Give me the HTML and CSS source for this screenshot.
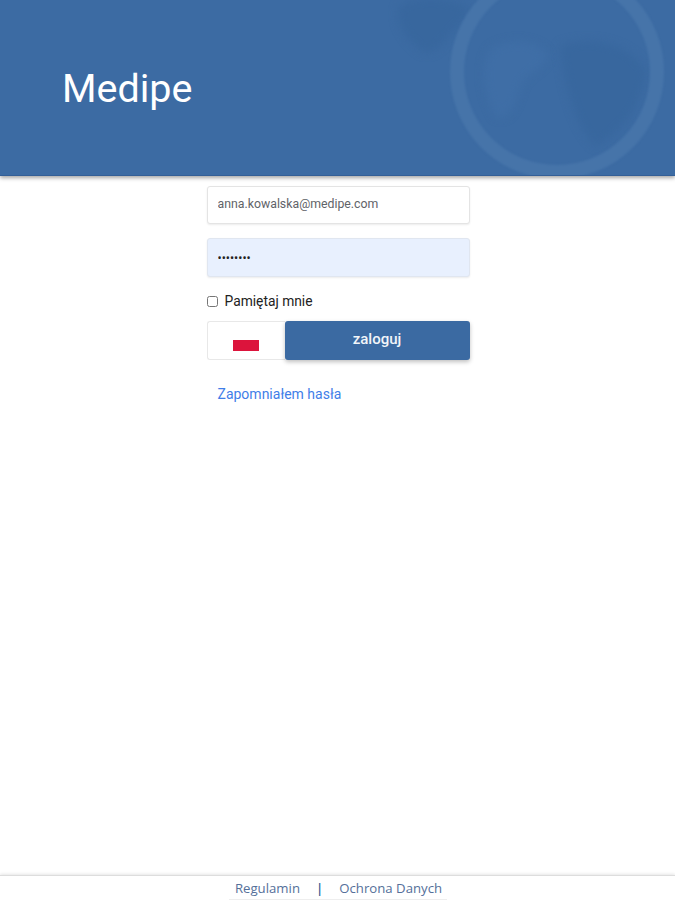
FILE: index.html
```html
<!DOCTYPE html>
<html lang="pl">
<head>
    <meta charset="UTF-8">
    <meta name="viewport" content="width=device-width, initial-scale=1.0">
    <title>Medipe</title>
    <link rel="stylesheet" href="styles.css">
</head>
<body>
<div class="page">
    <header class="top-bar">
        <svg class="globe" width="335" height="176" viewBox="340 0 335 176" aria-hidden="true">
            <path class="land land-dark" d="M398 8 C410 -6 455 -4 468 8 C466 24 452 30 446 40 C436 50 428 56 420 50 C408 40 396 26 398 8 Z"/>
            <path class="land land-light" d="M490 50 C510 36 540 40 548 56 C540 72 526 72 520 88 C516 106 506 122 496 116 C486 100 478 70 490 50 Z"/>
            <path class="land land-dark" d="M560 46 C590 34 630 44 646 70 C644 100 626 130 596 146 C578 130 566 96 560 46 Z"/>
            <circle class="ring" cx="557" cy="72" r="100"/>
        </svg>
        <h1 class="brand">Medipe</h1>
    </header>

    <main class="login">
        <form class="login-form">
            <input class="field" type="text" value="anna.kowalska@medipe.com">
            <input class="field field-filled" type="password" value="********">
            <label class="remember">
                <input type="checkbox"><span>Pamiętaj mnie</span>
            </label>
            <div class="actions">
                <div class="lang">
                    <span class="flag"></span>
                </div>
                <button class="submit" type="button">zaloguj</button>
            </div>
            <a class="forgot" href="#">Zapomniałem hasła</a>
        </form>
    </main>

    <footer class="bottom-bar">
        <div class="bottom-links">
            <a href="#">Regulamin</a>
            <span class="sep">|</span>
            <a href="#">Ochrona Danych</a>
        </div>
    </footer>
</div>
</body>
</html>
```

FILE: styles.css
```css
html, body {
    margin: 0;
    padding: 0;
}
body {
    font-family: Roboto, "Liberation Sans", sans-serif;
    background-color: #fff;
    overflow: hidden;
}
.page {
    display: flex;
    flex-direction: column;
    height: 900px;
}
.top-bar {
    position: relative;
    height: 176px;
    flex-shrink: 0;
    display: flex;
    align-items: center;
    padding-left: 62px;
    box-sizing: border-box;
    background-color: #3c6ba3;
    border-bottom: 1px solid #335f97;
    box-shadow: 0 2px 4px rgba(0,0,0,0.35);
    overflow: hidden;
}
.globe {
    position: absolute;
    right: 0;
    top: 0;
}
.ring {
    fill: none;
    stroke: #4674a9;
    stroke-width: 14;
    filter: blur(1px);
}
.land {
    filter: blur(4px);
}
.land-dark {
    fill: #38679e;
}
.land-light {
    fill: #3f6ea6;
}
.brand {
    position: relative;
    margin: 3px 0 0 0;
    font-size: 39.5px;
    font-weight: 400;
    color: #fff;
    line-height: 1;
}
.login {
    flex: 1;
    display: flex;
    justify-content: center;
    padding-top: 10px;
}
.login-form {
    width: 263px;
    margin-left: 1px;
    display: flex;
    flex-direction: column;
}
.field {
    display: block;
    box-sizing: border-box;
    width: 100%;
    height: 38px;
    margin-bottom: 14px;
    padding: 0 10px 3px;
    font-family: inherit;
    font-size: 12.3px;
    color: #5f6368;
    background-color: #fff;
    border: 1px solid #e4e4e4;
    border-radius: 3px;
    box-shadow: 0 1px 2px rgba(0,0,0,0.08);
    outline: none;
}
.field-filled {
    height: 39px;
    padding-bottom: 0;
    color: #222;
    background-color: #e8f0fe;
    border-color: #e0e6f0;
}
.remember {
    display: flex;
    align-items: center;
    gap: 7px;
    height: 18px;
    margin-top: 1px;
    font-size: 13.8px;
    color: #222;
}
.remember input {
    width: 11px;
    height: 11px;
    margin: 0;
}
.actions {
    display: flex;
    height: 39px;
    margin-top: 11px;
}
.lang {
    box-sizing: border-box;
    width: 78px;
    padding: 18px 0 0 25px;
    background-color: #fff;
    border: 1px solid #e8e8e8;
    border-right: none;
    border-radius: 3px 0 0 3px;
}
.flag {
    display: block;
    width: 26px;
    height: 11px;
    background-color: #dc143c;
}
.submit {
    flex: 1;
    padding: 0 0 3px;
    font-family: inherit;
    font-size: 15px;
    font-weight: 500;
    color: #f2f5f9;
    background-color: #3b6aa2;
    border: none;
    border-radius: 3px;
    box-shadow: 0 2px 4px rgba(0,0,0,0.25);
}
.forgot {
    margin: 26px 0 0 11px;
    font-size: 14px;
    color: #3f7ee8;
    text-decoration: none;
}
.bottom-bar {
    flex-shrink: 0;
    height: 24px;
    border-top: 1px solid #ddd;
    box-shadow: 0 -1px 3px rgba(0,0,0,0.1);
    display: flex;
    justify-content: center;
}
.bottom-links {
    box-sizing: border-box;
    width: 218px;
    height: 24px;
    padding-left: 2px;
    display: flex;
    justify-content: center;
    align-items: center;
    gap: 16px;
    font-family: "Open Sans", sans-serif;
    font-size: 13.2px;
    color: #55709a;
    border-bottom: 1px solid #eee;
}
.bottom-links a {
    color: #55709a;
    text-decoration: none;
}
.sep {
    color: #2f5d94;
    font-weight: 600;
}
```
